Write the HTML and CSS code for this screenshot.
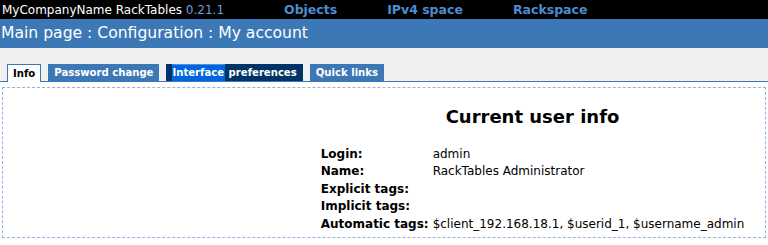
FILE: index.html
```html
<!DOCTYPE html>
<html>
<head>
<meta charset="utf-8">
<link rel="stylesheet" href="styles.css">
</head>
<body>
<div class="topbar">
  <div class="brand">MyCompanyName RackTables <span class="ver">0.21.1</span></div>
  <nav class="mainnav">
    <a class="navlink">Objects</a>
    <a class="navlink">IPv4 space</a>
    <a class="navlink">Rackspace</a>
  </nav>
</div>
<div class="pathbar">Main page : Configuration : My account</div>
<div class="tabbar">
  <a class="tab tab-active">Info</a>
  <a class="tab">Password change</a>
  <a class="tab tab-dark"><span class="hl">Interface</span> preferences</a>
  <a class="tab">Quick links</a>
</div>
<div class="content">
  <div class="portlet">
    <div class="leftcol"></div>
    <div class="rightcol">
      <h2 class="title">Current user info</h2>
      <table class="info">
        <tr><th>Login:</th><td>admin</td></tr>
        <tr><th>Name:</th><td>RackTables Administrator</td></tr>
        <tr><th>Explicit tags:</th><td></td></tr>
        <tr><th>Implicit tags:</th><td></td></tr>
        <tr><th>Automatic tags:</th><td>$client_192.168.18.1, $userid_1, $username_admin</td></tr>
      </table>
    </div>
  </div>
</div>
</body>
</html>
```
FILE: styles.css
```css
html, body {
  margin: 0;
  padding: 0;
  background: #ffffff;
  font-family: "DejaVu Sans", Verdana, sans-serif;
  color: #000;
}
.topbar {
  background: #000;
  height: 19px;
  display: flex;
  align-items: center;
  font-size: 12px;
  white-space: nowrap;
}
.brand {
  color: #fff;
  padding-left: 2px;
  width: 282px;
}
.ver {
  color: #6d9fd3;
}
.mainnav {
  display: flex;
  gap: 50px;
}
.navlink {
  color: #4d8cd0;
  font-weight: bold;
  font-size: 12.5px;
}
.pathbar {
  background: #3c78b5;
  color: #fff;
  height: 29px;
  line-height: 28px;
  font-size: 15.6px;
  padding-left: 1px;
  white-space: nowrap;
}
.tabbar {
  background: #f0f0f0;
  height: 33px;
  border-bottom: 1px solid #3c78b5;
  display: flex;
  align-items: flex-end;
  gap: 7px;
  padding-left: 7px;
}
.tab {
  font-size: 10.1px;
  font-weight: bold;
  color: #fff;
  background: #3c78b5;
  height: 17px;
  line-height: 18px;
  padding: 0 6px;
  white-space: nowrap;
  box-sizing: border-box;
}
.tab-active {
  background: #fff;
  color: #000;
  border: 1px solid #3c78b5;
  border-bottom: none;
  height: 18px;
  margin-bottom: -1px;
  padding: 0 5px;
}
.tab-dark {
  background: #003366;
}
.hl {
  background: #0066dd;
  display: inline-block;
  height: 17px;
  border-top: 1px solid #4a90e8;
  box-sizing: border-box;
  line-height: 16px;
  padding-right: 1px;
}
.content {
  padding: 5px 2px 0 2px;
}
.portlet {
  border: 1px dashed #8fb6e0;
  height: 149px;
  display: grid;
  grid-template-columns: 297px 1fr;
}
.rightcol {
  display: flex;
  flex-direction: column;
  align-items: center;
}
.title {
  font-size: 18px;
  font-weight: bold;
  margin: 18px 0 18px 0;
  line-height: 21px;
}
.info {
  border-collapse: collapse;
  font-size: 12px;
}
.info th {
  text-align: left;
  font-weight: bold;
  padding: 0 4px 0 0;
  height: 17.5px;
  white-space: nowrap;
}
.info td {
  padding: 0;
  white-space: nowrap;
}
```
